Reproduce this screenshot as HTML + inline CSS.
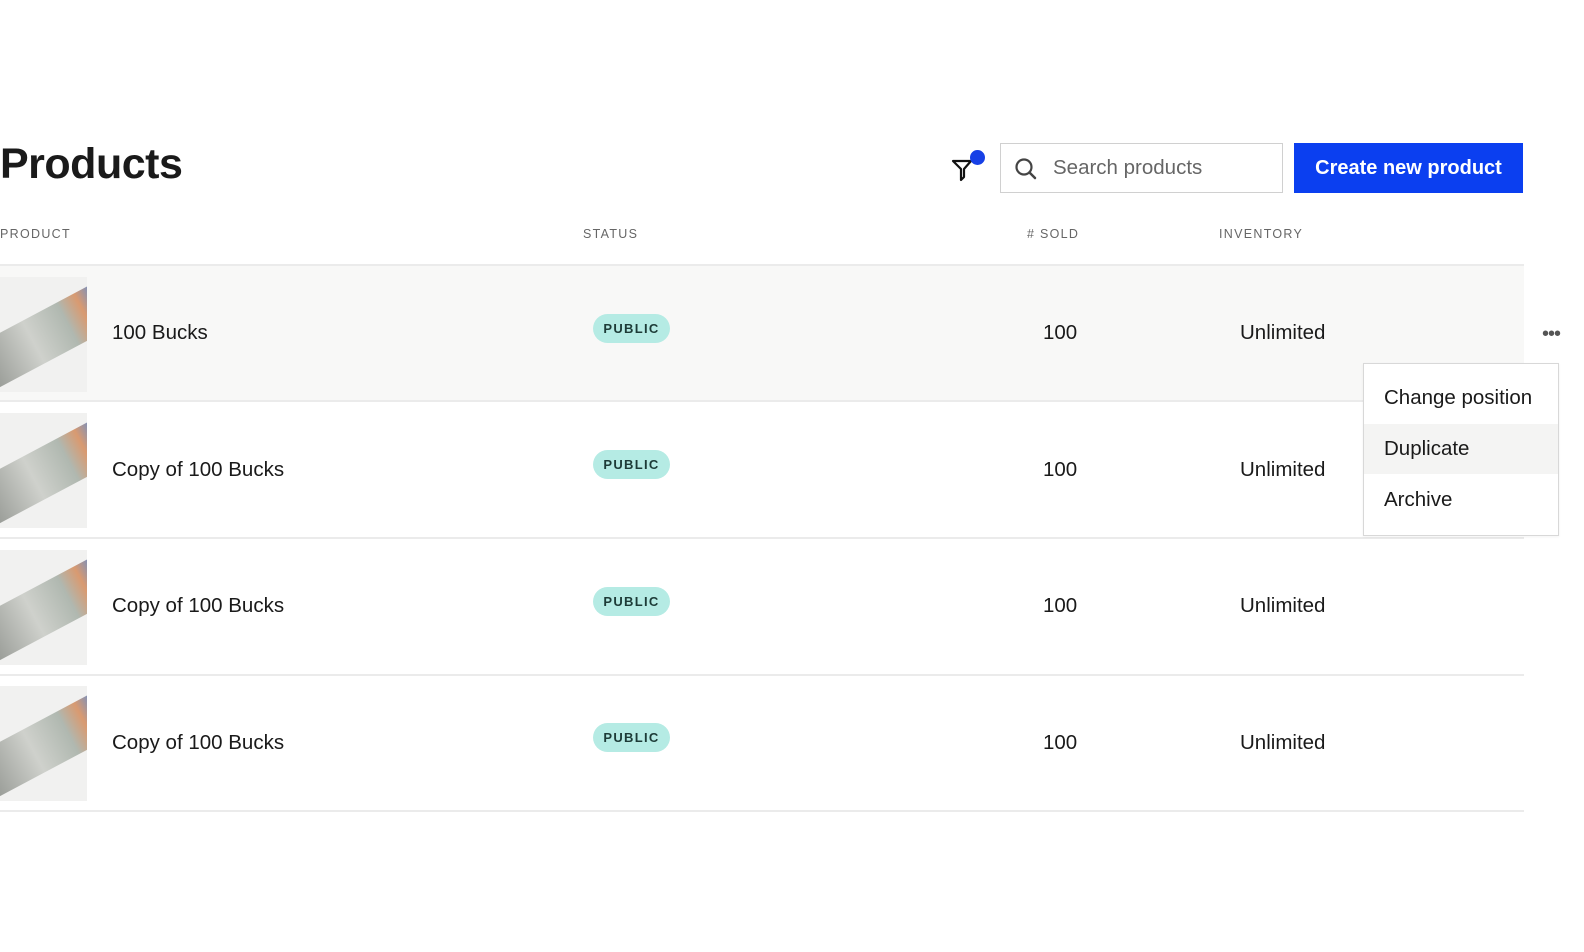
<!DOCTYPE html><html><head><style>
body{margin:0;width:1584px;height:952px;background:#fff;font-family:"Liberation Sans",sans-serif;color:#1a1a1a;position:relative;overflow:hidden}
.a{position:absolute}
h1{position:absolute;left:0;top:140px;margin:0;font-size:43px;font-weight:bold;letter-spacing:-0.5px}
.hd{position:absolute;top:227px;font-size:12.5px;letter-spacing:1.3px;color:#666}
.line{position:absolute;left:0;width:1524px;height:2px;background:#ebebeb}
.thumb{position:absolute;left:0;width:87px;height:115px;background:#f1f1f0;overflow:hidden}
.nm{position:absolute;left:112px;font-size:20.5px}
.badge{position:absolute;left:593px;width:77px;height:29px;border-radius:15px;background:#b5ebe4;font-size:13px;font-weight:bold;letter-spacing:1.3px;text-align:center;line-height:29px;color:#1d3b37}
.num{position:absolute;left:1043px;font-size:20.5px}
.inv{position:absolute;left:1240px;font-size:20.5px}
.mi{position:absolute;left:1384px;font-size:20.5px}
</style></head><body>
<h1>Products</h1>
<svg class="a" style="left:950px;top:155px" width="30" height="28" viewBox="0 0 30 28"><path d="M3 6 H21 L14 14 V22 L11 25 V14 Z" fill="none" stroke="#111" stroke-width="2.2" stroke-linejoin="round"/></svg>
<div class="a" style="left:970px;top:150px;width:15px;height:15px;border-radius:50%;background:#1740e6"></div>
<div class="a" style="left:1000px;top:143px;width:281px;height:48px;border:1px solid #d0d0d0;background:#fff"></div>
<svg class="a" style="left:1013px;top:156px" width="26" height="26" viewBox="0 0 26 26"><circle cx="11" cy="11" r="7.5" fill="none" stroke="#444" stroke-width="2.2"/><path d="M16.5 16.5 L22 22" stroke="#444" stroke-width="2.5" stroke-linecap="round"/></svg>
<div class="a" style="left:1053px;top:156px;font-size:20.5px;color:#666">Search products</div>
<div class="a" style="left:1294px;top:143px;width:229px;height:50px;background:#0b3ff0;color:#fff;font-size:20px;font-weight:bold;text-align:center;line-height:50px">Create new product</div>
<div class="hd" style="left:0">PRODUCT</div>
<div class="hd" style="left:583px">STATUS</div>
<div class="hd" style="left:1027px"># SOLD</div>
<div class="hd" style="left:1219px">INVENTORY</div>
<div class="a" style="left:0;top:266px;width:1524px;height:135px;background:#f8f8f7"></div>
<div class="line" style="top:264px"></div>
<div class="line" style="top:400px"></div>
<div class="line" style="top:537px"></div>
<div class="line" style="top:674px"></div>
<div class="line" style="top:810px"></div>

<div class="thumb" style="top:277px"><div class="a" style="left:-20px;top:35px;width:130px;height:48px;background:linear-gradient(90deg,#9a9d98,#cfd1cc 40%,#b0b8b0 70%,#d99a70 85%,#6a8fc9);transform:rotate(-28deg)"></div></div>
<div class="thumb" style="top:413px"><div class="a" style="left:-20px;top:35px;width:130px;height:48px;background:linear-gradient(90deg,#9a9d98,#cfd1cc 40%,#b0b8b0 70%,#d99a70 85%,#6a8fc9);transform:rotate(-28deg)"></div></div>
<div class="thumb" style="top:550px"><div class="a" style="left:-20px;top:35px;width:130px;height:48px;background:linear-gradient(90deg,#9a9d98,#cfd1cc 40%,#b0b8b0 70%,#d99a70 85%,#6a8fc9);transform:rotate(-28deg)"></div></div>
<div class="thumb" style="top:686px"><div class="a" style="left:-20px;top:35px;width:130px;height:48px;background:linear-gradient(90deg,#9a9d98,#cfd1cc 40%,#b0b8b0 70%,#d99a70 85%,#6a8fc9);transform:rotate(-28deg)"></div></div>

<div class="nm" style="top:321px">100 Bucks</div>
<div class="nm" style="top:458px">Copy of 100 Bucks</div>
<div class="nm" style="top:594px">Copy of 100 Bucks</div>
<div class="nm" style="top:731px">Copy of 100 Bucks</div>
<div class="badge" style="top:314px">PUBLIC</div>
<div class="badge" style="top:450px">PUBLIC</div>
<div class="badge" style="top:587px">PUBLIC</div>
<div class="badge" style="top:723px">PUBLIC</div>
<div class="num" style="top:321px">100</div>
<div class="num" style="top:458px">100</div>
<div class="num" style="top:594px">100</div>
<div class="num" style="top:731px">100</div>
<div class="inv" style="top:321px">Unlimited</div>
<div class="inv" style="top:458px">Unlimited</div>
<div class="inv" style="top:594px">Unlimited</div>
<div class="inv" style="top:731px">Unlimited</div>
<div class="a" style="left:1542px;top:323px;font-size:20px;color:#555;letter-spacing:-1px">•••</div>

<div class="a" style="left:1363px;top:363px;width:194px;height:171px;border:1px solid #d8d8d8;background:#fff;box-shadow:0 1px 3px rgba(0,0,0,.05)"></div>
<div class="a" style="left:1364px;top:424px;width:194px;height:50px;background:#f4f4f3"></div>
<div class="mi" style="top:386px">Change position</div>
<div class="mi" style="top:437px">Duplicate</div>
<div class="mi" style="top:488px">Archive</div>
</body></html>
